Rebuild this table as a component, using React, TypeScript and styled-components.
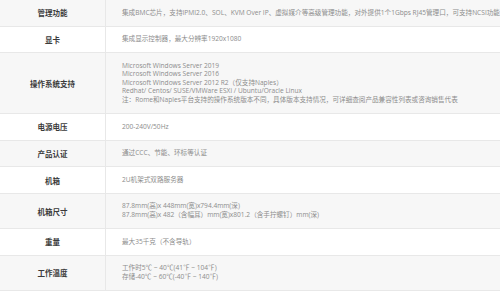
import React from "react";
import styled, { createGlobalStyle } from "styled-components";

const GlobalStyle = createGlobalStyle`
  html, body {
    margin: 0;
    padding: 0;
    background: #ffffff;
  }
  body {
    width: 500px;
    height: 296px;
    overflow: hidden;
    font-family: "Open Sans", "Noto Sans CJK SC", sans-serif;
  }
`;

const SpecTable = styled.div`
  width: 500px;
  display: flex;
  flex-direction: column;
`;

// 한 줄 - 홀수 줄은 회색 배경
type RowProps = {
  $shaded: boolean;
};
const Row = styled.div<RowProps>`
  display: grid;
  grid-template-columns: 106px 1fr;
  background-color: ${(props) => (props.$shaded ? "#f7f7f7" : "#ffffff")};
  border-bottom: 1px solid #e8e8e8;
`;

const Label = styled.div`
  display: flex;
  align-items: center;
  justify-content: center;
  border-right: 1px solid #e8e8e8;
  font-family: "Noto Sans CJK SC", sans-serif;
  font-size: 7.5px;
  font-weight: 700;
  color: #3a3a3a;
`;

const Value = styled.div`
  padding: 8.5px 0 8.5px 16px;
  font-size: 6.6px;
  line-height: 8.6px;
  color: #8c8c8c;
  white-space: nowrap;
`;

const Line = styled.div``;

const specs: { label: string; lines: string[] }[] = [
  {
    label: "管理功能",
    lines: [
      "集成BMC芯片，支持IPMI2.0、SOL、KVM Over IP、虚拟媒介等高级管理功能，对外提供1个1Gbps RJ45管理口，可支持NCSI功能",
    ],
  },
  { label: "显卡", lines: ["集成显示控制器，最大分辨率1920x1080"] },
  {
    label: "操作系统支持",
    lines: [
      "Microsoft Windows Server 2019",
      "Microsoft Windows Server 2016",
      "Microsoft Windows Server 2012 R2（仅支持Naples）",
      "Redhat/ Centos/ SUSE/VMWare ESXi / Ubuntu/Oracle Linux",
      "注：Rome和Naples平台支持的操作系统版本不同，具体版本支持情况，可详细查阅产品兼容性列表或咨询销售代表",
    ],
  },
  { label: "电源电压", lines: ["200-240V/50Hz"] },
  { label: "产品认证", lines: ["通过CCC、节能、环标等认证"] },
  { label: "机箱", lines: ["2U机架式双路服务器"] },
  {
    label: "机箱尺寸",
    lines: [
      "87.8mm(高)x 448mm(宽)x794.4mm(深)",
      "87.8mm(高)x 482（含幅耳）mm(宽)x801.2（含手拧螺钉）mm(深)",
    ],
  },
  { label: "重量", lines: ["最大35千克（不含导轨）"] },
  {
    label: "工作温度",
    lines: ["工作时5℃ ~ 40℃(41℉ ~ 104℉)", "存储-40℃ ~ 60℃(-40℉ ~ 140℉)"],
  },
];

export default function App() {
  return (
    <>
      <GlobalStyle />
      <SpecTable>
        {specs.map((spec, i) => (
          <Row key={spec.label} $shaded={i % 2 === 0}>
            <Label>{spec.label}</Label>
            <Value>
              {spec.lines.map((line) => (
                <Line key={line}>{line}</Line>
              ))}
            </Value>
          </Row>
        ))}
      </SpecTable>
    </>
  );
}
